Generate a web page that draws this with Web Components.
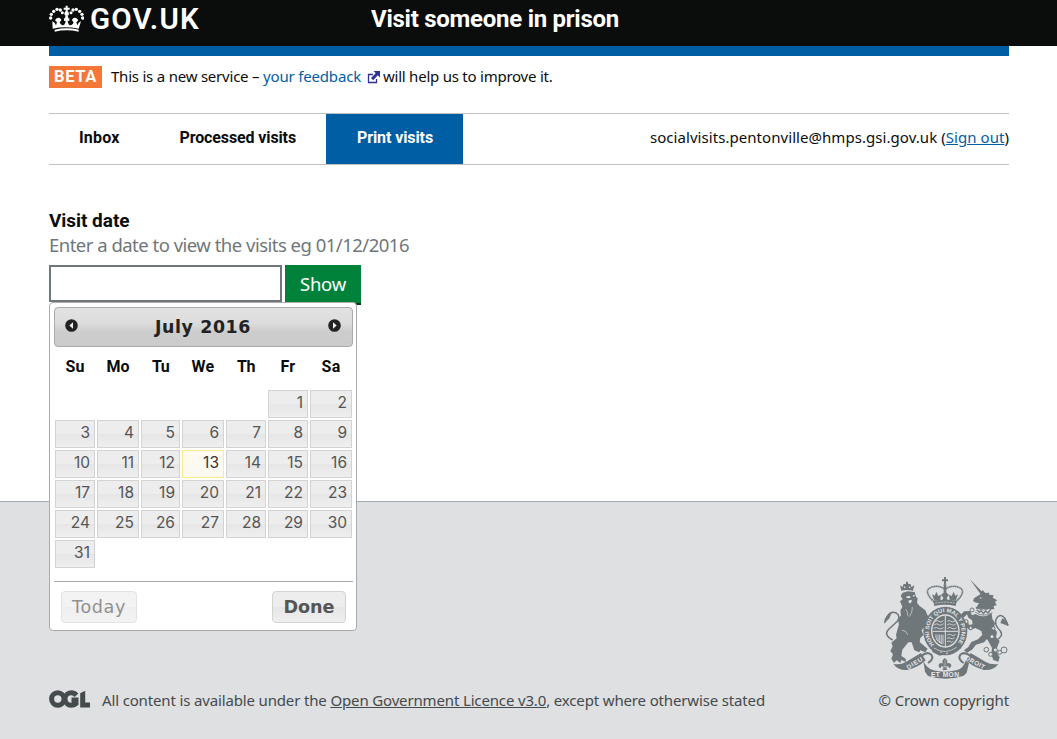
<!DOCTYPE html>
<html lang="en">
<head>
<meta charset="utf-8">
<title>Visit someone in prison</title>
<style>
html,body{margin:0;height:100%;overflow:hidden}
body{font-family:"Noto Sans",sans-serif;font-size:15px;color:#0b0c0c;background:#fff}
</style>
</head>
<body>
<visits-page></visits-page>
<script>
const define = (name, html, setup) => customElements.define(name, class extends HTMLElement {
  constructor() {
    super();
    this.attachShadow({mode: 'open'}).innerHTML = html;
  }
  connectedCallback() { if (setup) setup(this, this.shadowRoot); }
});

define('visits-page', `
<style>
:host{display:flex;flex-direction:column;height:739px;width:1057px}
main{box-sizing:border-box;width:960px;margin-left:49px;height:455px;flex:none}
.bar{height:10px;background:#005ea5}
</style>
<site-header></site-header>
<main>
  <div class="bar"></div>
  <phase-banner></phase-banner>
  <visit-nav></visit-nav>
  <date-form></date-form>
</main>
<site-footer></site-footer>`);

define('site-header', `
<style>
:host{display:flex;flex:none;height:46px;background:#0b0c0c;color:#fff;padding-left:49px;font-family:Roboto,sans-serif;font-weight:700}
svg{width:35px;height:28px;margin-top:5px}
.logo{width:322px;display:flex;gap:6px;font-size:29.5px;line-height:39px;font-weight:600}
.title{font-size:24px;line-height:38px}
</style>
<div class="logo">
<svg viewBox="27 15 105 84" fill="#fff">
 <path d="M77 17h6v6h6v6h-6v7h-6v-7h-6v-6h6z"/>
 <circle cx="80" cy="41" r="7"/><circle cx="80" cy="53" r="5"/>
 <circle cx="61" cy="30" r="5"/><circle cx="51" cy="28" r="5"/><circle cx="41" cy="34" r="5"/><circle cx="34" cy="43" r="5"/><circle cx="32" cy="54" r="5"/><circle cx="67" cy="38" r="4.5"/>
 <circle cx="99" cy="30" r="5"/><circle cx="109" cy="28" r="5"/><circle cx="119" cy="34" r="5"/><circle cx="126" cy="43" r="5"/><circle cx="128" cy="54" r="5"/><circle cx="93" cy="38" r="4.5"/>
 <path d="M37 64q8 3 11 12l3-9-6-6q3-8 10-8 8 0 9 8l-5 6q2 8 8 9 7 0 9-8l1-6-5 1v-9l5 2-1-7h8l-1 7 5-2v9l-5-1 1 6q2 8 9 8 6-1 8-9l-5-6q1-8 9-8 7 0 10 8l-6 6 3 9q3-9 11-12l-7 22q-40-8-78 0z"/>
 <path d="M44 89q36-8 72 0v6q-36-8-72 0z"/>
</svg>
<fit-text w="110">GOV.UK</fit-text></div>
<div class="title"><fit-text w="248">Visit someone in prison</fit-text></div>`);

define('phase-banner', `
<style>
:host{display:flex;padding-top:10px;height:57px;box-sizing:border-box}
.tag{box-sizing:border-box;width:53px;height:22px;padding-left:5px;background:#f47738;color:#fff;font:700 16.5px/21px Roboto,sans-serif}
.msg{display:flex;margin-left:9px;line-height:21px}
svg{width:13px;height:13px;margin:5px 3px 0 6px}
a{color:#005ea5}
</style>
<div class="tag"><fit-text w="43">BETA</fit-text></div>
<div class="msg"><fit-text w="152">This is a new service –&nbsp;</fit-text><a><fit-text w="98">your feedback</fit-text></a>
<svg viewBox="0 0 13 13"><path d="M6 3.5H1.5v8H9.5V8" fill="none" stroke="#2e3191" stroke-width="1.3"/><path d="M6.5 0H13v6.5l-2.2-2.2-4.6 4.9L4 7l4.7-4.8z" fill="#2e3191"/></svg>
<fit-text w="169.5">will help us to improve it.</fit-text></div>`);

define('visit-nav', `
<style>
:host{display:flex;height:52px;box-sizing:border-box;border-top:1px solid #bfc1c3;border-bottom:1px solid #bfc1c3;line-height:47px}
.tab{padding:0 30px;font:700 16px/47px Roboto,sans-serif}
.on{background:#005ea5;color:#fff;padding:0 30px 0 31px}
.user{margin-left:auto}
a{color:#005ea5;text-decoration:underline}
</style>
<div class="tab"><fit-text w="40.5">Inbox</fit-text></div>
<div class="tab"><fit-text w="116.5">Processed visits</fit-text></div>
<div class="tab on"><fit-text w="76">Print visits</fit-text></div>
<div class="user"><fit-text w="359">socialvisits.pentonville@hmps.gsi.gov.uk (<a>Sign out</a>)</fit-text></div>`);

define('date-form', `
<style>
:host{display:block;padding-top:43px}
.label{font:700 19px/25px Roboto,sans-serif}
.hint{font-size:18.5px;line-height:24px;height:25px;color:#6f777b}
.row{display:flex;gap:3px;margin-top:7px;position:relative}
input{box-sizing:border-box;width:233px;height:37px;border:2px solid #6f777b;background:#fff;padding:4px;margin:0}
button{width:76px;height:38px;border:0;padding:0;background:#00823b;box-shadow:0 2px #003618;color:#fff;font:18.5px/38px "Noto Sans",sans-serif}
date-picker{position:absolute;left:0;top:37px;z-index:2}
</style>
<div class="label"><fit-text w="80.5">Visit date</fit-text></div>
<div class="hint"><fit-text w="360">Enter a date to view the visits eg 01/12/2016</fit-text></div>
<div class="row"><input type="text" aria-label="Visit date"><button><fit-text w="46">Show</fit-text></button><date-picker></date-picker></div>`);

define('date-picker', `
<style>
:host{display:block;box-sizing:border-box;width:308px;height:329px;padding:4px 3px 0 4px;border:1px solid #aaa;border-radius:4px;background:#fff}
.head{box-sizing:border-box;width:299px;height:40px;display:flex;justify-content:space-between;padding:0 11px 0 10px;border:1px solid #aaa;border-radius:4px;background:linear-gradient(#e3e3e3 0,#dcdcdc 40%,#cdcdcd 62%,#cbcbcb);color:#222;font:700 17.4px/38px "DejaVu Sans",sans-serif}
svg{width:13px;height:13px;margin-top:11px}
.week,.days{display:grid;grid-template-columns:40px 42px 39px 42px 40px 40px 42px;gap:2px;margin-left:1px}
.week{font:700 16px/39px Roboto,sans-serif;height:43px;align-items:start;justify-items:center;color:#0b0c0c}
.days{grid-auto-rows:28px}
.pane{width:299px;margin-top:13px;border-top:1px solid #aaa;display:flex;justify-content:space-between;box-sizing:border-box;padding:9px 7px 0}
.pane div{box-sizing:border-box;width:76px;height:32px;border:1px solid #d3d3d3;border-radius:4px;background:linear-gradient(#ededed 50%,#e6e6e6 51%,#efefef);color:#555;text-align:center;font:17.6px/30px "DejaVu Sans",sans-serif}
.pane .today{opacity:.65}
.pane .done{font-weight:700;width:74px}
</style>
<div class="head">
<svg viewBox="0 0 13 13"><circle cx="6.5" cy="6.5" r="6.3" fill="#222"/><path d="M8 3.3v6.4L4.3 6.5z" fill="#eee"/></svg>
<fit-text w="96">July 2016</fit-text>
<svg viewBox="0 0 13 13"><circle cx="6.5" cy="6.5" r="6.3" fill="#222"/><path d="M5 3.3v6.4l3.7-3.2z" fill="#eee"/></svg>
</div>
<div class="week"><fit-text w="19">Su</fit-text><fit-text w="23">Mo</fit-text><fit-text w="17">Tu</fit-text><fit-text w="23">We</fit-text><fit-text w="18">Th</fit-text><fit-text w="15">Fr</fit-text><fit-text w="19">Sa</fit-text></div>
<div class="days"></div>
<div class="pane"><div class="today"><fit-text w="54">Today</fit-text></div><div class="done"><fit-text w="51">Done</fit-text></div></div>`,
(host, root) => {
  const days = root.querySelector('.days');
  for (let d = 1; d <= 31; d++) {
    const cell = document.createElement('day-cell');
    cell.textContent = d;
    if (d === 1) cell.style.gridColumn = 6;
    if (d === 13) cell.classList.add('today');
    days.append(cell);
  }
});

define('day-cell', `
<style>
:host{display:block;box-sizing:border-box;height:28px;padding-right:4px;border:1px solid #d3d3d3;background:linear-gradient(#ededed 50%,#e6e6e6 51%,#efefef);color:#555;text-align:right;font:15.5px/24px Inter,sans-serif}
:host(.today){border-color:#fbec88;background:linear-gradient(#fffaf0,#fafaf0);color:#363636}
</style><slot></slot>`);

define('site-footer', `
<style>
:host{display:flex;flex:1;box-sizing:border-box;border-top:1px solid #a1acb2;background:#dee0e2;color:#454a4c;padding:0 48px 0 49px}
.lic{display:flex;gap:12px;margin-top:187px;line-height:22px}
.lic svg{width:41px;height:18px;margin-top:1px}
a{text-decoration:underline}
.crown{margin-left:auto;width:139px;padding-top:68px;line-height:22px;text-align:right}
royal-arms{display:block;margin-left:0}
.copy{margin-top:4px}
</style>
<div class="lic">
<svg viewBox="0 0 41 18"><g fill="none" stroke="#454a4c" stroke-width="5"><circle cx="8.8" cy="9" r="6.2"/><path d="M27.5 5.2Q25.3 2.8 22.2 2.8A6.2 6.2 0 1 0 22.2 15.2Q25 15.2 27 13.5V10H22.5"/></g><path d="M31.2 3.2L36.2.7V12.6H41V17.6H31.2z" fill="#454a4c"/></svg>
<fit-text w="663">All content is available under the <a>Open Government Licence v3.0</a>, except where otherwise stated</fit-text></div>
<div class="crown"><royal-arms></royal-arms><div class="copy"><fit-text w="130.5">© Crown copyright</fit-text></div></div>`);

define('royal-arms', `
<style>:host{display:block}svg{display:block;width:150px;height:115px;overflow:visible}
text{font-family:"Liberation Sans",sans-serif;font-weight:700;fill:#e6e8ea}</style>
<svg viewBox="0 0 450 345" fill="#6f777b">
 <!-- crown above the shield -->
 <path d="M222 21h6v7h6v6h-6v9h-6v-9h-6v-6h6z"/>
 <g fill="none" stroke="#6f777b" stroke-width="5" stroke-dasharray="5 1.2"><path d="M193 96Q159 64 181 53Q205 43 223 57M257 96Q291 64 269 53Q245 43 227 57"/></g>
 <path d="M221 43h8v48h-8zM193 92l-7-19 8 4 5-12 6 13 8-4-2 17zM257 92l7-19-8 4-5-12-6 13-8-4 2 17zM213 75l12-11 12 11-7 8 4 9h-18l4-9z"/>
 <path d="M190 93q35-8 70 0l-3 15q-32-8-64 0z"/><path d="M196 99q29-5 58 0" stroke="#dee0e2" stroke-width="2" stroke-dasharray="6 3" fill="none"/>
 <!-- lion -->
 <path d="M94 62l-4-16 8 5 2-8 8-2v-6h6v6l8 2 2 8 9-5-4 16q-18-4-35 0z"/>
 <circle cx="104" cy="52" r="2.5" fill="#dee0e2"/><circle cx="119" cy="52" r="2.5" fill="#dee0e2"/>
 <path d="M98 68L113 64 134 66 138 80 143 85 141 98 148 107 166 121 178 148 169 159 177 172 170 181 163 172 155 180 160 195 151 204 149 216 163 228 173 236 166 247 151 241 148 247 133 241 125 217 115 217 97 239 94 258 107 266 108 276 94 270 91 279 80 271 72 279 64 266 69 253 61 243 68 229 64 218 80 205 78 194 87 163 83 148 93 136 91 122 97 110 90 94 98 88 92 78z"/>
 <path d="M107 80l12-3 3 6-9 2zM116 91l10-1-3 10-7-2zM128 75l7 1-4 5z" fill="#dee0e2"/>
 <path d="M107 118q8 8 6 19M127 111q1 16-9 29M96 180q13 1 17 14" stroke="#dee0e2" stroke-width="2" fill="none"/>
 <path d="M68 210Q38 194 57 177L83 153Q93 137 77 128Q62 123 53 137Q45 147 44 158" fill="none" stroke="#6f777b" stroke-width="4.5"/><path d="M42 161l7-21 17-13-8 18z"/>
 <!-- unicorn -->
 <path d="M299 27L339 68 333 74z"/>
 <path d="M331 73L338 60 346 69 358 68 357 74 371 76 368 83 382 91 375 95 380 106 371 108 373 118 317 116 327 99 318 98 309 93 312 85z"/>
 <circle cx="332" cy="84" r="2.5" fill="#dee0e2"/>
 <path d="M316 132Q341 147 365 130L367 146 375 160 372 174 381 186 378 202 389 213 382 230 378 243 389 262 385 275 370 270 364 254 366 234 358 219 351 207 342 217 318 224 306 239 291 248 282 241 295 231 304 216 324 208 337 194 334 183 316 174 300 181 286 170 281 153 293 151 297 165 308 163 306 151 295 143 291 133 281 143 272 135 282 124 300 123 306 136z"/>
 <path d="M317 111q22 18 48 0M315 126q24 18 52 2" fill="none" stroke="#6f777b" stroke-width="2.5"/><path d="M320 119l8 8 5-5 7 9 7-8 7 6 9-12" fill="none" stroke="#6f777b" stroke-width="4"/>
 <path d="M374 214Q403 199 391 183Q372 165 378 148Q389 127 404 144L414 166" fill="none" stroke="#6f777b" stroke-width="4.5"/><path d="M416 168l-25-9 6-14 14 9z"/>
 <g fill="#dee0e2" stroke="#6f777b" stroke-width="3"><circle cx="306" cy="120" r="6"/><circle cx="288" cy="155" r="6"/><circle cx="302" cy="174" r="5"/><circle cx="370" cy="175" r="5"/><circle cx="366" cy="200" r="6"/><circle cx="349" cy="239" r="7"/><circle cx="362" cy="253" r="6"/><circle cx="376" cy="240" r="6"/><circle cx="389" cy="247" r="6"/><circle cx="402" cy="240" r="9"/></g>
 <!-- garter and quartered shield -->
 <ellipse cx="226" cy="183" rx="66" ry="73"/>
 <ellipse cx="226" cy="183" rx="43" ry="50" fill="#dee0e2"/><ellipse cx="226" cy="183" rx="39" ry="46"/>
 <path d="M226 138v90M188 184h76" stroke="#dee0e2" stroke-width="3"/>
 <g fill="none" stroke="#dee0e2" stroke-width="2.5"><path d="M196 154q6-5 11 0t13-2M193 164q8-5 13 0t15-3M191 175q9-5 14 0t16-2M232 195q7-5 12 0t13-2M231 205q7-4 11 0t12-2M231 215q6-4 10 0t7-1M232 154q6-5 11 0t13-2M232 164q8-5 13 0t14-3M232 175q9-5 14 0t14-2"/><path d="M198 193q-3 19 17 27M204 194v19M209 194v25M214 194v28M219 194v29"/></g>
 <path id="garter" d="M193 224A49 56 0 1 1 259 224" fill="none"/>
 <text font-size="16.5"><textPath href="#garter" textLength="248" lengthAdjust="spacingAndGlyphs">HONI SOIT QUI MAL Y PENSE</textPath></text>
 <path d="M187 225l19 23 32-8 26-16 5 7-28 18-32 8-22-11z"/><path d="M191 234q34 22 69-2" fill="none" stroke="#dee0e2" stroke-width="2"/>
 <circle cx="213" cy="246" r="2.5" fill="#dee0e2"/><circle cx="231" cy="250" r="2.5" fill="#dee0e2"/>
 <!-- motto ribbon -->
 <g id="fold"><path d="M70 282Q93 285 109 275L153 249 167 271Q144 293 113 300 84 302 70 282z"/><path d="M154 258Q171 243 184 254Q193 267 174 279" fill="none" stroke="#6f777b" stroke-width="6"/></g>
 <use href="#fold" transform="matrix(-1 0 0 1 455 0)"/>
 <path d="M160 273q10 22 30 28 34 9 72-1 18-6 25-28l10 7-7 29-9 9q-52 18-107 1l-9-13z"/>
 <text x="115" y="299" font-size="19" textLength="52" transform="rotate(-32 115 299)">DIEU</text>
 <text x="183" y="320" font-size="20" textLength="84">ET MON</text>
 <text x="284" y="268" font-size="19" textLength="64" transform="rotate(28 284 268)">DROIT</text>
 <path d="M224 264q15 11 3 20 7-10 16-1 3 8-6 12l-2-6-7 4 4 7h-15l4-7-7-4-2 6q-9-5-5-13 9-7 15 2-11-10 2-20z"/><path d="M225 270v24M215 289h20" stroke="#dee0e2" stroke-width="1.5"/>
</svg>`);

/* Inline text whose tracking is adjusted so that the run fills the width given in "w". */
define('fit-text', `
<style>:host{display:inline-block;white-space:nowrap;text-align:left;vertical-align:top}</style><span><slot></slot></span>`,
(host, root) => {
  const span = root.querySelector('span');
  const w = parseFloat(host.getAttribute('w'));
  const n = host.textContent.length;
  const natural = span.getBoundingClientRect().width;
  span.style.letterSpacing = ((w - natural) / n) + 'px';
  host.style.width = w + 'px';
});
</script>
</body>
</html>
